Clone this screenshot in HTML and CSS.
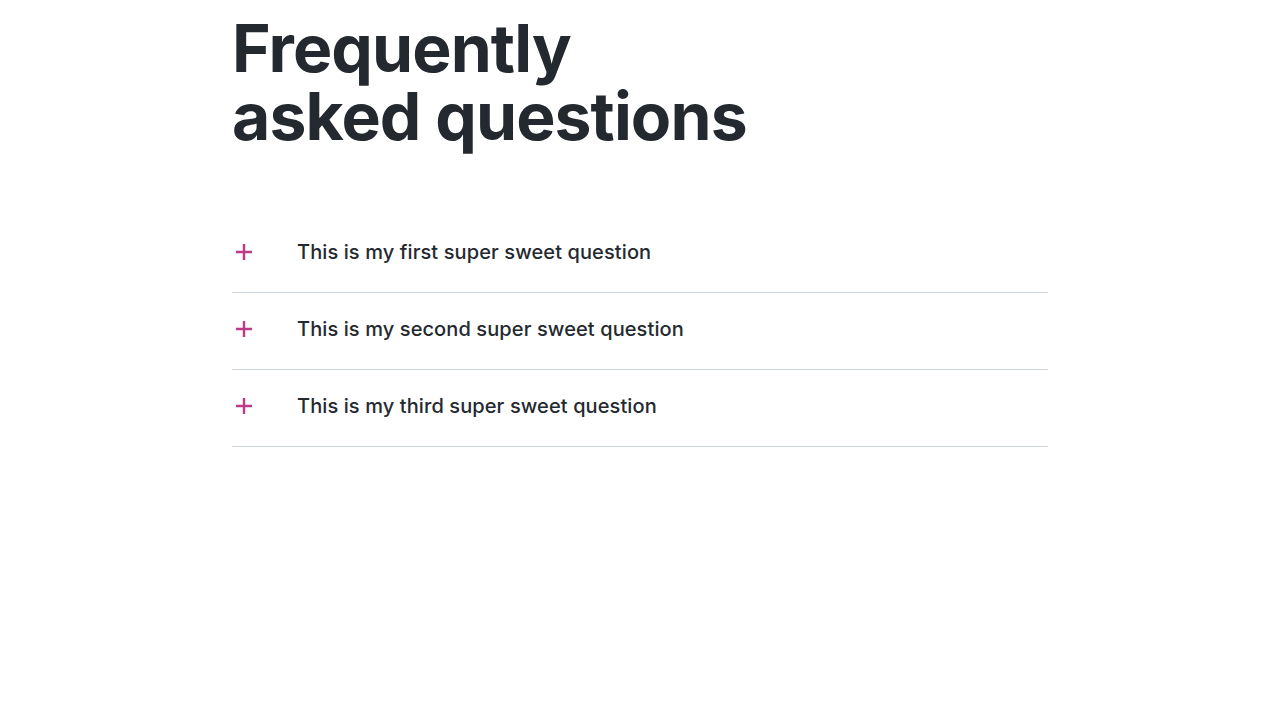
FILE: index.html
```html
<!DOCTYPE html>
<html lang="en">
<head>
<meta charset="utf-8">
<title>FAQ</title>
<link rel="stylesheet" href="styles.css">
</head>
<body>
<main class="faq">
  <h1 class="faq-title"><span class="faq-title-line">Frequently</span><span class="faq-title-line">asked questions</span></h1>
  <ul class="faq-list">
    <li class="faq-item">
      <svg class="faq-icon" viewBox="0 0 16 16" width="16" height="16"><path d="M8 0v16M0 8h16" stroke="currentColor" stroke-width="2.4" fill="none"/></svg>
      <span class="faq-q">This is my first super sweet question</span>
    </li>
    <li class="faq-item">
      <svg class="faq-icon" viewBox="0 0 16 16" width="16" height="16"><path d="M8 0v16M0 8h16" stroke="currentColor" stroke-width="2.4" fill="none"/></svg>
      <span class="faq-q">This is my second super sweet question</span>
    </li>
    <li class="faq-item">
      <svg class="faq-icon" viewBox="0 0 16 16" width="16" height="16"><path d="M8 0v16M0 8h16" stroke="currentColor" stroke-width="2.4" fill="none"/></svg>
      <span class="faq-q">This is my third super sweet question</span>
    </li>
  </ul>
</main>
</body>
</html>
```
FILE: styles.css
```css
* { box-sizing: border-box; }
html, body { margin: 0; padding: 0; background: #ffffff; }
body {
  font-family: Inter, "Noto Sans", "Liberation Sans", sans-serif;
  color: #24292f;
}
.faq {
  width: 816px;
  margin: 0 auto;
  padding-top: 14px;
}
.faq-title {
  margin: 0;
  font-size: 66px;
  line-height: 68px;
  font-weight: 700;
  letter-spacing: -0.9px;
  color: #24292f;
}
.faq-title-line {
  display: block;
}
.faq-list {
  list-style: none;
  margin: 66px 0 0;
  padding: 0;
}
.faq-item {
  display: flex;
  align-items: center;
  gap: 45px;
  padding: 22px 0 26px 4px;
  border-bottom: 1px solid #d0d7de;
}
.faq-icon {
  flex: none;
  color: #bf3989;
}
.faq-q {
  font-size: 20px;
  line-height: 28px;
  font-weight: 500;
  letter-spacing: 0.1px;
  color: #24292f;
}
```
